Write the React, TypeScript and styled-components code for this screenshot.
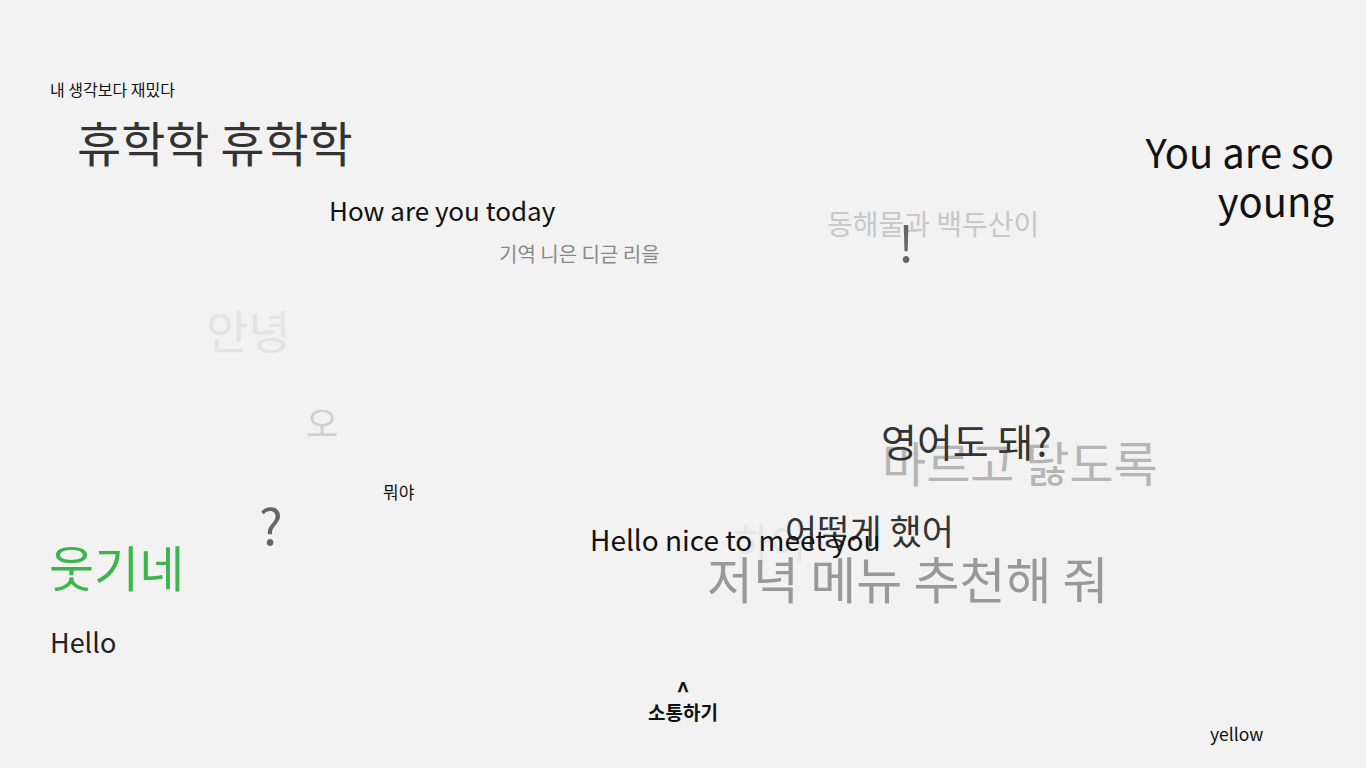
import React from "react";
import styled, { createGlobalStyle } from "styled-components";

const GlobalStyle = createGlobalStyle`
  html, body {
    margin: 0;
    padding: 0;
    background: #f2f2f2;
  }
  body {
    font-family: "Noto Sans CJK KR", "Noto Sans", sans-serif;
  }
`;

const Canvas = styled.main`
  position: relative;
  width: 1366px;
  height: 768px;
  overflow: hidden;
  background: #f2f2f2;
  font-family: "Noto Sans CJK KR", "Noto Sans", sans-serif;
`;

const Word = styled.span<{ $size: number; $color: string; $weight?: number }>`
  position: absolute;
  white-space: nowrap;
  line-height: 1;
  font-size: ${(p) => p.$size}px;
  color: ${(p) => p.$color};
  font-weight: ${(p) => p.$weight ?? 400};
`;

const RightQuote = styled.div`
  position: absolute;
  right: 32px;
  top: 127px;
  text-align: right;
  font-size: 40px;
  line-height: 49px;
  color: #111;
`;

const CommButton = styled.button`
  position: absolute;
  left: 50%;
  top: 679px;
  transform: translateX(-50%);
  display: flex;
  flex-direction: column;
  align-items: center;
  background: none;
  border: none;
  padding: 0;
  font-family: "Noto Sans CJK KR", "Noto Sans", sans-serif;
  color: #111;
  cursor: pointer;
`;

const Caret = styled.span`
  font-size: 23px;
  font-weight: 700;
  line-height: 20px;
  height: 20px;
`;

const CommLabel = styled.span`
  font-size: 19px;
  font-weight: 700;
  line-height: 1.4;
`;

type W = { t: string; x: number; y: number; s: number; c: string };

const words: W[] = [
  { t: "내 생각보다 재밌다", x: 50, y: 81, s: 16, c: "#111" },
  { t: "휴학학 휴학학", x: 77, y: 117, s: 48, c: "#333" },
  { t: "How are you today", x: 329, y: 197, s: 26, c: "#111" },
  { t: "기역 니은 디귿 리을", x: 499, y: 244, s: 20, c: "#888" },
  { t: "동해물과 백두산이", x: 827, y: 209, s: 28, c: "#c8c8c8" },
  { t: "!", x: 898, y: 215, s: 50, c: "#666" },
  { t: "안녕", x: 206, y: 306, s: 46, c: "#e4e4e4" },
  { t: "오", x: 306, y: 404, s: 35, c: "#d0d0d0" },
  { t: "뭐야", x: 383, y: 483, s: 17, c: "#111" },
  { t: "?", x: 259, y: 498, s: 50, c: "#666" },
  { t: "마르고 닳도록", x: 882, y: 437, s: 48, c: "#b5b5b5" },
  { t: "영어도 돼?", x: 881, y: 421, s: 39, c: "#333" },
  { t: "하이", x: 733, y: 521, s: 40, c: "#e6e6e6" },
  { t: "어떻게 했어", x: 785, y: 512, s: 35, c: "#333" },
  { t: "저녁 메뉴 추천해 줘", x: 707, y: 552, s: 50, c: "#999" },
  { t: "Hello nice to meet you", x: 590, y: 525, s: 28, c: "#111" },
  { t: "웃기네", x: 49, y: 541, s: 49, c: "#3cb54a" },
  { t: "Hello", x: 50, y: 628, s: 27, c: "#222" },
  { t: "yellow", x: 1210, y: 725, s: 17.5, c: "#111" },
];

export default function App() {
  return (
    <>
      <GlobalStyle />
      <Canvas>
        {words.map((w, i) => (
          <Word key={i} $size={w.s} $color={w.c} style={{ left: w.x, top: w.y }}>
            {w.t}
          </Word>
        ))}
        <RightQuote>
          You are so
          <br />
          young
        </RightQuote>
        <CommButton>
          <Caret>^</Caret>
          <CommLabel>소통하기</CommLabel>
        </CommButton>
      </Canvas>
    </>
  );
}
